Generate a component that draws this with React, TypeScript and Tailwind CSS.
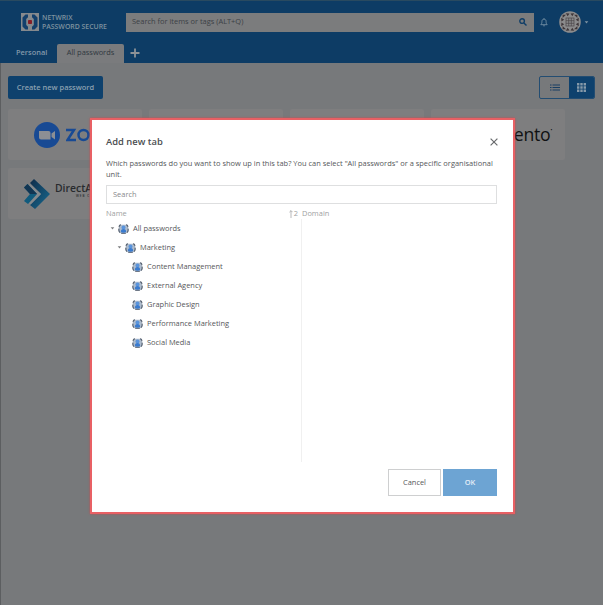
import React from "react";

function BrandMark() {
  return (
    <svg viewBox="0 0 18 18" className="size-[18px] shrink-0">
      <rect width="18" height="18" fill="#85898d" />
      <path d="M7 1.5H4.5L1.5 4.6v8.8l3 3.1H7v-2.8L5.2 12V6L7 4.3zM11 1.5h2.5l3 3.1v8.8l-3 3.1H11v-2.8l1.8-1.7V6L11 4.3z" fill="#123f6c" />
      <rect x="7" y="7" width="4" height="4" rx=".8" fill="#851d28" />
    </svg>
  );
}

function Avatar() {
  return (
    <svg viewBox="0 0 22 22" className="size-[22px]">
      <circle cx="11" cy="11" r="10.8" fill="#8b8b8c" />
      <g fill="#3f3639">
        <path d="M6.8 2.2l3.7.2-1.8 2.8zM15.2 2.2l-3.7.2 1.8 2.8zM6.8 19.8l3.7-.2-1.8-2.8zM15.2 19.8l-3.7-.2 1.8-2.8z" />
        <path d="M2.2 6.8l.2 3.7 2.8-1.8zM2.2 15.2l.2-3.7 2.8 1.8zM19.8 6.8l-.2 3.7-2.8-1.8zM19.8 15.2l-.2-3.7-2.8 1.8z" />
        <path d="M3.6 7V3.8H7zM15 3.8h3.4V7zM3.6 15v3.2H7zM18.4 15v3.2H15z" />
      </g>
      <g fill="none" stroke="#4b4548" strokeWidth=".7">
        <rect x="7" y="7" width="8" height="8" />
        <path d="M9.7 7v8M12.3 7v8M7 9.7h8M7 12.3h8" />
      </g>
    </svg>
  );
}

function UnitIcon() {
  return (
    <svg viewBox="0 0 11 10" className="h-[10px] w-[11px] shrink-0">
      <path d="M2.2.8h6.6l1.2 3 .4 3-1.2 2-1.6.8H3.4l-1.6-.8-1.2-2 .4-3z" fill="#aebccd" />
      <path d="M2.9.9Q1 1 1.2 3.2M8.1.9Q10 1 9.8 3.2M1 4.6Q.4 7.6 2 8.6M10 4.6q.6 3-1 4M3.2 9.3h4.6" fill="none" stroke="#4d5868" strokeWidth="1.1" />
      <circle cx="5.5" cy="3.5" r="2" fill="#5a94dc" />
      <path d="M2.9 8.1c-.2-2 .8-3 2.6-3s2.8 1 2.6 3q-2.6 1.2-5.2 0z" fill="#3a7bcf" />
    </svg>
  );
}

function Caret({ className = "" }: { className?: string }) {
  return (
    <svg viewBox="0 0 6 4" className={`h-[3px] w-[5px] shrink-0 ${className}`}>
      <path d="M.6 .4h4.8L3 3.4z" fill="currentColor" />
    </svg>
  );
}

function Header() {
  return (
    <header className="h-[63px] border-t border-[#294a60] bg-[#0d3c65]">
      <div className="flex h-[42px] items-center pl-[21px] pr-[14px]">
        <BrandMark />
        <div className="ml-[3px] w-[84px] shrink-0 whitespace-nowrap text-[6.9px] leading-[9px] font-semibold text-[#7d929f]">
          NETWRIX
          <br />
          PASSWORD SECURE
        </div>
        <div className="flex h-[19px] w-[408px] shrink-0 items-center justify-between bg-[#7b7c7d] pl-[6px] pr-[7px]">
          <span className="text-[7.45px] text-[#3c4146]">Search for items or tags (ALT+Q)</span>
          <svg viewBox="0 0 8 8" className="size-[8px]" fill="none" stroke="#103e67" strokeWidth="1.4">
            <circle cx="3.1" cy="3.1" r="2.3" />
            <path d="M4.9 4.9L7.5 7.5" />
          </svg>
        </div>
        <svg viewBox="0 0 8 9" className="ml-[6px] h-[9px] w-[8px] shrink-0" fill="none" stroke="#7591a5" strokeWidth=".9">
          <path d="M.8 6.7c1-1 1.1-1.8 1.1-3.2C1.9 2 2.6 1.2 4 1.2s2.1.8 2.1 2.3c0 1.4.1 2.2 1.1 3.2zM3.2 7.8h1.6M4 .2v1" />
        </svg>
        <div className="ml-[11px] shrink-0"><Avatar /></div>
        <Caret className="ml-[3px] text-[#8196a5]" />
      </div>
      <nav className="flex h-[20px] items-stretch text-[7.45px] font-semibold">
        <div className="flex w-[57px] items-center pl-[16px] text-[#8399aa]">Personal</div>
        <div className="mt-px flex w-[67px] items-center justify-center rounded-t-[2px] bg-[#7a7b7d] pb-px text-[7.45px] font-medium text-[#30383f]">All passwords</div>
        <svg viewBox="0 0 10 10" className="ml-[6px] mt-[5px] size-[10px]" stroke="#8d9297" strokeWidth="1.8">
          <path d="M5 .5v9M.5 5h9" />
        </svg>
      </nav>
    </header>
  );
}

function Toolbar() {
  return (
    <div className="flex items-center justify-between pl-[8px] pr-[8px] pt-[13px]">
      <button className="h-[23px] w-[95px] rounded-[2px] bg-[#0e416d] text-[7.45px] font-semibold whitespace-nowrap text-[#8ba0b0]">Create new password</button>
      <div className="flex h-[23px] w-[56px] overflow-hidden rounded-[2px] border border-[#234d72]">
        <div className="flex w-[29px] items-center justify-center">
          <svg viewBox="0 0 10 7" className="h-[7px] w-[10px]" stroke="#183f64" strokeWidth="1.1">
            <path d="M0 1h1.5M0 3.5h1.5M0 6h1.5M2.5 1H10M2.5 3.5H10M2.5 6H10" />
          </svg>
        </div>
        <div className="flex flex-1 items-center justify-center bg-[#0e416d]">
          <svg viewBox="0 0 9 9" className="size-[9px]" fill="#8599a9">
            <path d="M0 0h2.4v2.4H0zM3.3 0h2.4v2.4H3.3zM6.6 0H9v2.4H6.6zM0 3.3h2.4v2.4H0zM3.3 3.3h2.4v2.4H3.3zM6.6 3.3H9v2.4H6.6zM0 6.6h2.4V9H0zM3.3 6.6h2.4V9H3.3zM6.6 6.6H9V9H6.6z" />
          </svg>
        </div>
      </div>
    </div>
  );
}

function Cards() {
  return (
    <div className="mt-[10px] grid grid-cols-[134px_134px_134px_134px] gap-x-[7px] gap-y-[8px] pl-[8px]">
      <div className="flex h-[51px] items-center overflow-hidden rounded-[2px] bg-[#7e7e7f] pl-[26px]">
        <svg viewBox="0 0 26 26" className="size-[26px] shrink-0">
          <circle cx="13" cy="13" r="13" fill="#184a94" />
          <path d="M5 9h9.5q2 0 2 2v6.5H7q-2 0-2-2zM17.5 11.5L21 9v8.5l-3.5-2.5z" fill="#8c8f94" />
        </svg>
        <svg viewBox="0 0 62 14" className="ml-[6px] h-[14px] w-[62px] shrink-0" fill="none" stroke="#184a94" strokeWidth="2.5">
          <path d="M0 2h8L1.5 12H10" />
          <circle cx="17.5" cy="7" r="5" />
          <circle cx="31" cy="7" r="5" />
          <path d="M41 13V5q0-3 3-3t3 3v8M47 5q0-3 3-3t3 3v8" />
        </svg>
      </div>
      <div className="rounded-[2px] bg-[#7e7e7f]" />
      <div className="rounded-[2px] bg-[#7e7e7f]" />
      <div className="flex items-center justify-end rounded-[2px] bg-[#7e7e7f] pr-[13px] text-[19px] leading-none font-medium tracking-[-0.3px] text-[#101112]">
        <span className="origin-right scale-x-[.93]">Magento</span><span className="-mt-[8px] text-[5px]">•</span>
      </div>
      <div className="flex h-[51px] items-center overflow-hidden rounded-[2px] bg-[#7e7e7f] pl-[16px]">
        <svg viewBox="0 0 26 30" className="h-[30px] w-[26px] shrink-0">
          <defs>
            <linearGradient id="arrow" x1="0" y1="0" x2="1" y2="1">
              <stop stopColor="#102c49" />
              <stop offset="1" stopColor="#176b91" />
            </linearGradient>
          </defs>
          <path d="M6 4L10 0l16 15-15 15-5-4 11-11z" fill="url(#arrow)" />
          <path d="M6 5l11 10L6.5 25.5 5 24l8-9-8-8.5z" fill="#858a8e" />
          <path d="M0 8.5L3.5 5 13 15l-9 10-4-3 6-7z" fill="#115b7d" />
          <path d="M0 8.5L3.5 5 13 15H6z" fill="#123653" />
        </svg>
        <div className="ml-[5px] -mt-[7px] whitespace-nowrap text-[10.4px] leading-[11px] font-semibold text-[#282b2e]">DirectA
          <div className="pl-[21px] text-[3px] leading-[4px] tracking-[1px]">WEB C</div>
        </div>
      </div>
    </div>
  );
}

function TreeRow({ label, level = 2 }: { label: string; level?: number }) {
  return (
    <div className={`flex h-[19px] items-center ${level === 0 ? "pl-[4px]" : level === 1 ? "pl-[11px]" : "pl-[26px]"}`}>
      {level < 2 && <Caret className="mr-[3px] text-[#7d7e80]" />}
      <UnitIcon />
      <span className="ml-[4px] whitespace-nowrap">{label}</span>
    </div>
  );
}

function Dialog() {
  return (
    <section className="absolute left-[90px] top-[118px] flex h-[396px] w-[425px] flex-col border-2 border-[#e86064] bg-white px-[14px] text-[#55575a] shadow-[0_0_2px_#c94a4d]">
      <div className="mt-[15px] flex h-[14px] items-center justify-between">
        <h1 className="text-[9.4px] font-semibold text-[#4b4e51]">Add new tab</h1>
        <svg viewBox="0 0 8 8" className="mr-[1px] size-[8px]" stroke="#696b6d" strokeWidth="1.2">
          <path d="M.6 .6l6.8 6.8M7.4 .6L.6 7.4" />
        </svg>
      </div>
      <p className="mt-[9px] h-[24px] whitespace-nowrap text-[7.46px] leading-[11px]">
        Which passwords do you want to show up in this tab? You can select "All passwords" or a specific organisational
        <br />
        unit.
      </p>
      <div className="mt-[3px] flex h-[19px] w-[391px] items-center border border-[#dedfe0] pl-[6px] text-[7.45px] text-[#88898b]">Search</div>
      <div className="mt-[4px] flex w-[391px] text-[7.45px]">
        <div className="w-[195px]">
          <div className="flex h-[11px] items-center justify-between pr-[3px] text-[#a0a1a2]">
            <span>Name</span>
            <span className="flex items-center gap-px">
              <svg viewBox="0 0 4 8" className="h-[8px] w-[4px]" fill="none" stroke="#9b9c9d" strokeWidth=".7">
                <path d="M2 8V.7M.4 2.2L2 .6l1.6 1.6" />
              </svg>
              2
            </span>
          </div>
          <TreeRow label="All passwords" level={0} />
          <TreeRow label="Marketing" level={1} />
          {["Content Management", "External Agency", "Graphic Design", "Performance Marketing", "Social Media"].map((label) => <TreeRow key={label} label={label} />)}
        </div>
        <div className="h-[254px] flex-1">
          <div className="flex h-[11px] items-center pl-px text-[#a0a1a2]">Domain</div>
          <div className="h-[243px] border-l border-[#f0f0f0]" />
        </div>
      </div>
      <div className="mb-[16px] mr-[2px] mt-auto flex justify-end gap-[2px] text-[7.45px]">
        <button className="h-[27px] w-[53px] border border-[#cecfd0]">Cancel</button>
        <button className="h-[27px] w-[54px] bg-[#6da4d3] font-semibold text-[#e3edf6]">OK</button>
      </div>
    </section>
  );
}

export default function App() {
  return (
    <main className="relative h-[605px] w-[603px] overflow-hidden bg-[#77797b] font-['Open_Sans','Noto_Sans',sans-serif] shadow-[inset_1px_0_0_#5c5e60]">
      <Header />
      <Toolbar />
      <Cards />
      <Dialog />
    </main>
  );
}
